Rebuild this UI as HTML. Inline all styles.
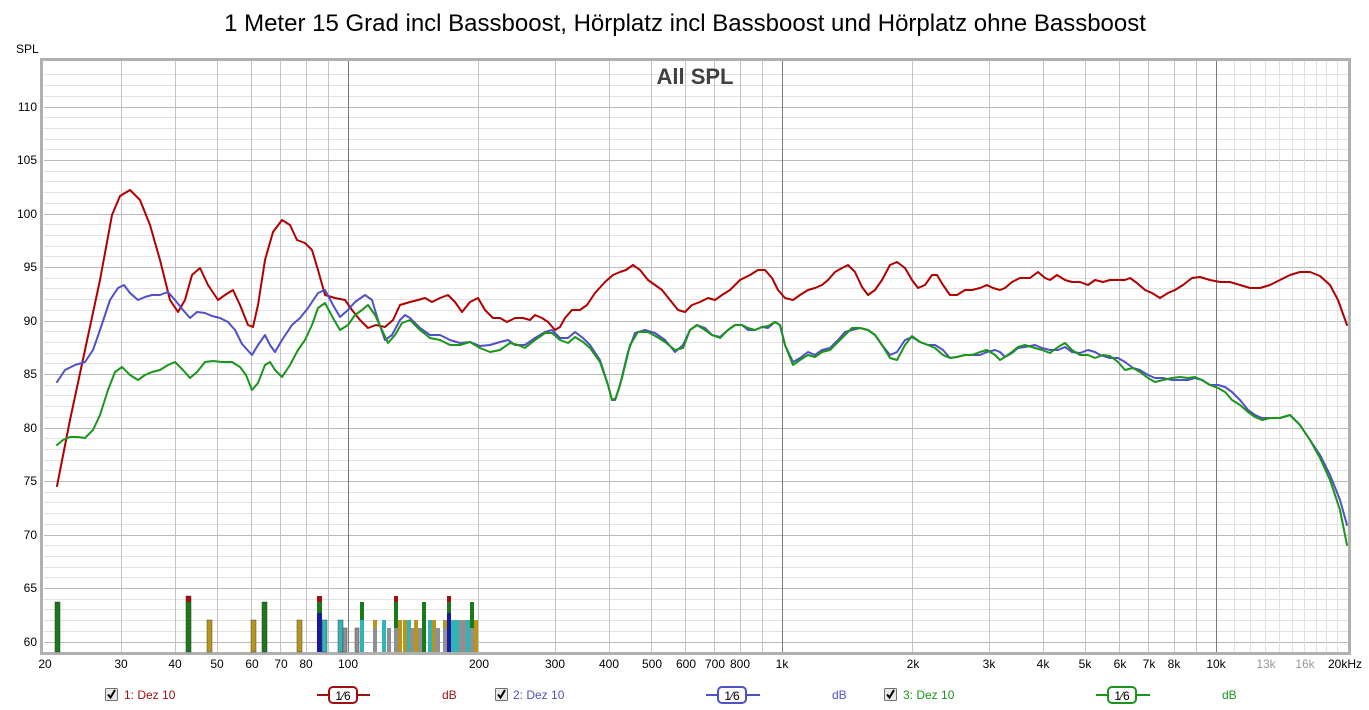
<!DOCTYPE html>
<html><head><meta charset="utf-8"><style>
html,body{margin:0;padding:0;background:#fff;width:1369px;height:710px;overflow:hidden}
svg{display:block;font-family:"Liberation Sans",sans-serif}
</style></head><body>
<svg width="1369" height="710" viewBox="0 0 1369 710" xmlns="http://www.w3.org/2000/svg">
<text x="685" y="31" font-size="24" text-anchor="middle" fill="#000">1 Meter 15 Grad incl Bassboost, Hörplatz incl Bassboost und Hörplatz ohne Bassboost</text>
<text x="16" y="53" font-size="12" fill="#000">SPL</text>
<rect x="41.5" y="59.5" width="1308" height="594" fill="#fff" stroke="#b0b0b0" stroke-width="3"/>
<g stroke="#e2e2e2" stroke-width="1">
<path d="M44 74.5H1348M44 85.5H1348M44 96.5H1348M44 117.5H1348M44 128.5H1348M44 139.5H1348M44 149.5H1348M44 171.5H1348M44 181.5H1348M44 192.5H1348M44 203.5H1348M44 224.5H1348M44 235.5H1348M44 246.5H1348M44 256.5H1348M44 278.5H1348M44 288.5H1348M44 299.5H1348M44 310.5H1348M44 331.5H1348M44 342.5H1348M44 353.5H1348M44 363.5H1348M44 385.5H1348M44 395.5H1348M44 406.5H1348M44 417.5H1348M44 438.5H1348M44 449.5H1348M44 460.5H1348M44 470.5H1348M44 492.5H1348M44 502.5H1348M44 513.5H1348M44 524.5H1348M44 545.5H1348M44 556.5H1348M44 567.5H1348M44 577.5H1348M44 599.5H1348M44 609.5H1348M44 620.5H1348M44 631.5H1348"/>
</g>
<g stroke="#b8b8b8" stroke-width="1">
<path d="M44 107.5H1348M44 160.5H1348M44 214.5H1348M44 267.5H1348M44 321.5H1348M44 374.5H1348M44 428.5H1348M44 481.5H1348M44 535.5H1348M44 588.5H1348M44 642.5H1348"/>
</g>
<g stroke="#c4c4c4" stroke-width="1">
<path d="M121.5 61V652M175.5 61V652M217.5 61V652M251.5 61V652M280.5 61V652M306.5 61V652M328.5 61V652M478.5 61V652M555.5 61V652M609.5 61V652M651.5 61V652M685.5 61V652M714.5 61V652M740.5 61V652M762.5 61V652M912.5 61V652M989.5 61V652M1043.5 61V652M1085.5 61V652M1119.5 61V652M1148.5 61V652M1174.5 61V652M1196.5 61V652"/>
</g>
<g stroke="#e0e0e0" stroke-width="1">
<path d="M1234.5 61V652M1250.5 61V652M1265.5 61V652M1279.5 61V652M1292.5 61V652M1304.5 61V652M1316.5 61V652M1326.5 61V652M1337.5 61V652"/>
</g>
<g stroke="#7a7a7a" stroke-width="1">
<path d="M348.5 61V652M782.5 61V652M1216.5 61V652"/>
</g>
<text x="695" y="84" font-size="22" font-weight="bold" text-anchor="middle" fill="#404040">All SPL</text>
<g>
<rect x="55" y="602" width="5" height="50" fill="#1a7a1a" stroke="#333" stroke-width=".5"/>
<rect x="186" y="596" width="5" height="56" fill="#1a7a1a" stroke="#333" stroke-width=".5"/><rect x="186" y="596" width="5" height="6" fill="#a01010"/>
<rect x="207" y="620" width="5" height="32" fill="#b8961e" stroke="#444" stroke-width=".5"/>
<rect x="251" y="620" width="5" height="32" fill="#b8961e" stroke="#444" stroke-width=".5"/>
<rect x="262" y="602" width="5" height="50" fill="#1a7a1a" stroke="#333" stroke-width=".5"/>
<rect x="297" y="620" width="5" height="32" fill="#b8961e" stroke="#444" stroke-width=".5"/>
<rect x="317" y="596" width="5" height="56" fill="#1a7a1a"/><rect x="317" y="596" width="5" height="6" fill="#a01010"/><rect x="317" y="613" width="5" height="39" fill="#1a1aa0"/>
<rect x="322" y="620" width="5" height="32" fill="#30b4b4" stroke="#444" stroke-width=".5"/>
<rect x="338" y="620" width="5" height="32" fill="#30b4b4" stroke="#444" stroke-width=".5"/>
<rect x="343" y="628" width="4" height="24" fill="#909090" stroke="#444" stroke-width=".5"/>
<rect x="355" y="628" width="4" height="24" fill="#909090" stroke="#444" stroke-width=".5"/>
<rect x="360" y="602" width="4" height="50" fill="#1a7a1a"/><rect x="360" y="620" width="4" height="32" fill="#30b4b4"/>
<rect x="373" y="620" width="4" height="32" fill="#b8961e"/><rect x="373" y="628" width="4" height="24" fill="#909090"/>
<rect x="382" y="620" width="4" height="32" fill="#30b4b4"/><rect x="387" y="628" width="4" height="24" fill="#909090"/>
<rect x="394" y="596" width="4" height="56" fill="#1a7a1a"/><rect x="394" y="596" width="4" height="6" fill="#a01010"/><rect x="394" y="628" width="4" height="24" fill="#909090"/>
<rect x="398" y="620" width="4" height="32" fill="#b8961e"/>
<rect x="403" y="620" width="4" height="32" fill="#b8961e"/><rect x="407" y="620" width="4" height="32" fill="#30b4b4"/><rect x="410" y="628" width="4" height="24" fill="#909090"/>
<rect x="414" y="620" width="4" height="32" fill="#b8961e"/><rect x="418" y="628" width="4" height="24" fill="#909090"/>
<rect x="422" y="602" width="4" height="50" fill="#1a7a1a"/>
<rect x="428" y="620" width="4" height="32" fill="#30b4b4"/><rect x="432" y="620" width="4" height="32" fill="#b8961e"/><rect x="435" y="628" width="5" height="24" fill="#909090"/>
<rect x="443" y="620" width="4" height="32" fill="#b8961e"/><rect x="443" y="628" width="4" height="24" fill="#909090"/>
<rect x="447" y="596" width="4" height="56" fill="#1a7a1a"/><rect x="447" y="596" width="4" height="6" fill="#a01010"/><rect x="447" y="613" width="4" height="39" fill="#1a1aa0"/>
<rect x="451" y="620" width="4" height="32" fill="#30b4b4"/><rect x="455" y="620" width="4" height="32" fill="#30b4b4"/><rect x="459" y="620" width="4" height="32" fill="#909090"/><rect x="463" y="620" width="4" height="32" fill="#909090"/>
<rect x="466" y="620" width="4" height="32" fill="#30b4b4"/>
<rect x="470" y="602" width="4" height="50" fill="#1a7a1a"/><rect x="470" y="628" width="4" height="24" fill="#909090"/>
<rect x="474" y="620" width="4" height="32" fill="#b8961e"/>
</g>
<g fill="none" stroke-width="2" stroke-linejoin="round" stroke-linecap="round">
<polyline stroke="#b00000" points="57,486 70,420 85,350 100,280 112,215 120,196 130,190 140,200 150,225 160,260 170,300 178,312 185,300 192,275 200,268 208,285 218,300 225,295 233,290 240,305 248,325 253,327 258,305 265,260 273,232 282,220 290,225 297,240 305,243 312,250 318,270 325,295 335,298 345,300 352,310 360,320 368,328 376,325 385,327 393,320 400,305 410,302 418,300 425,298 432,302 440,298 448,295 455,302 462,312 470,302 478,298 485,310 493,318 500,318 507,322 515,318 523,318 530,320 535,315 542,318 548,322 555,330 560,327 565,318 572,310 580,310 587,305 595,293 605,282 613,275 620,272 626,270 633,265 640,270 648,280 655,285 662,290 670,300 678,310 685,312 692,305 700,302 708,298 715,300 722,295 730,290 740,280 750,275 758,270 765,270 772,278 778,290 785,298 793,300 800,295 808,290 815,288 822,285 828,280 835,272 842,268 848,265 855,272 862,287 868,295 875,290 882,280 890,265 897,262 905,268 912,280 918,288 925,285 932,275 937,275 943,285 950,295 957,295 965,290 972,290 980,288 987,285 993,288 1000,290 1005,288 1012,282 1020,278 1030,278 1038,272 1045,278 1050,280 1057,275 1065,280 1072,282 1080,282 1088,285 1095,280 1103,282 1110,280 1118,280 1125,280 1130,278 1137,283 1145,290 1152,293 1160,298 1168,293 1175,290 1183,285 1192,278 1200,277 1210,280 1220,282 1230,282 1240,285 1250,288 1260,288 1270,285 1280,280 1290,275 1300,272 1310,272 1320,276 1330,285 1338,300 1347,325"/>
<polyline stroke="#5050c8" points="57,382 65,370 75,365 85,362 93,350 100,330 110,300 118,288 124,285 130,293 138,300 145,297 152,295 160,295 168,292 175,300 183,310 190,318 197,312 205,313 212,316 220,318 228,322 235,330 242,344 252,355 258,345 265,335 270,345 275,352 282,340 292,325 300,318 308,308 318,293 325,290 333,305 340,317 348,310 355,302 365,295 372,300 378,320 385,340 392,335 400,320 405,315 410,318 420,328 430,335 440,335 450,340 460,343 470,342 480,346 490,345 500,342 508,340 515,345 525,345 535,338 545,332 552,330 560,338 568,338 575,332 583,338 590,345 600,360 608,385 612,400 615,400 620,385 628,352 635,333 645,330 655,333 665,340 675,352 683,345 690,330 697,325 705,328 712,335 720,337 728,330 735,325 742,325 748,330 755,330 762,327 768,328 775,322 780,325 785,345 793,362 800,358 808,352 815,355 822,350 830,348 838,340 845,332 852,330 860,328 868,330 875,335 882,345 890,355 897,352 905,340 912,337 920,342 928,345 935,345 943,350 950,358 957,357 965,355 972,355 980,355 987,352 995,350 1000,352 1005,357 1012,353 1018,348 1025,347 1035,345 1042,348 1050,350 1058,350 1065,347 1072,352 1080,353 1088,350 1095,352 1100,355 1110,358 1118,358 1125,362 1133,368 1140,370 1148,375 1155,378 1163,378 1172,380 1180,380 1188,380 1195,378 1202,380 1210,385 1218,385 1225,387 1232,392 1240,400 1248,410 1255,415 1262,418 1270,418 1280,418 1290,415 1300,425 1310,440 1320,455 1330,475 1340,500 1347,525"/>
<polyline stroke="#1a961a" points="57,445 63,440 70,437 78,437 85,438 93,430 100,415 108,390 115,372 122,367 130,375 138,380 145,375 152,372 160,370 168,365 175,362 183,370 190,378 197,372 205,362 213,361 222,362 232,362 240,367 246,375 252,390 258,383 265,365 270,362 275,370 282,377 290,365 298,350 305,340 312,325 318,308 325,303 333,318 340,330 348,325 355,315 362,310 368,305 375,315 382,330 388,343 395,335 402,323 410,320 420,330 430,338 440,340 450,345 460,345 470,342 480,348 490,352 500,350 510,343 518,345 525,348 535,340 545,333 552,333 560,340 568,343 575,337 583,342 590,348 600,362 608,385 612,400 616,398 622,378 630,345 638,332 648,332 657,337 665,342 675,350 683,348 690,330 697,325 705,330 712,335 720,338 728,330 735,325 742,325 748,328 755,330 762,327 768,326 775,322 780,325 785,345 793,365 800,360 808,355 815,357 822,352 830,350 838,342 845,335 852,328 860,328 868,330 875,335 882,345 890,358 897,360 905,345 912,336 920,342 928,345 935,348 943,355 950,358 957,357 965,355 972,355 980,352 987,350 995,355 1000,360 1005,357 1012,352 1018,347 1025,345 1035,348 1042,350 1050,353 1058,347 1065,343 1072,350 1080,355 1088,355 1095,358 1103,355 1110,356 1118,362 1125,370 1133,368 1140,372 1148,378 1155,382 1163,380 1172,378 1180,377 1188,378 1195,377 1202,380 1210,385 1218,388 1225,392 1232,400 1240,405 1248,412 1255,417 1262,420 1270,418 1280,418 1290,415 1300,425 1310,440 1320,458 1330,480 1340,510 1347,545"/>
</g>
<g font-size="12" text-anchor="end" fill="#000">
<text x="37" y="111">110</text><text x="37" y="164">105</text><text x="37" y="218">100</text><text x="37" y="271">95</text><text x="37" y="325">90</text><text x="37" y="378">85</text><text x="37" y="432">80</text><text x="37" y="485">75</text><text x="37" y="539">70</text><text x="37" y="592">65</text><text x="37" y="646">60</text>
</g>
<g font-size="12" text-anchor="middle" fill="#000">
<text x="45" y="668">20</text><text x="121" y="668">30</text><text x="175" y="668">40</text><text x="217" y="668">50</text><text x="252" y="668">60</text><text x="281" y="668">70</text><text x="306" y="668">80</text><text x="348" y="668">100</text><text x="479" y="668">200</text><text x="555" y="668">300</text><text x="609" y="668">400</text><text x="652" y="668">500</text><text x="686" y="668">600</text><text x="715" y="668">700</text><text x="740" y="668">800</text><text x="782" y="668">1k</text><text x="913" y="668">2k</text><text x="989" y="668">3k</text><text x="1043" y="668">4k</text><text x="1085" y="668">5k</text><text x="1120" y="668">6k</text><text x="1149" y="668">7k</text><text x="1174" y="668">8k</text><text x="1216" y="668">10k</text><text x="1266" y="668" fill="#999">13k</text><text x="1305" y="668" fill="#999">16k</text><text x="1345" y="668">20kHz</text>
</g>
<g font-size="12">
<g transform="translate(105,688)"><rect x=".5" y=".5" width="12" height="12" fill="#e8e8e8" stroke="#707070" rx="1"/><path d="M3 6.5l2.5 3L10 2" stroke="#000" stroke-width="2" fill="none"/></g>
<text x="124" y="699" fill="#a01010">1: Dez 10</text>
<g stroke="#a01010" stroke-width="2" fill="#fff"><path d="M317 695H370"/><rect x="329" y="687" width="28" height="16" rx="4"/></g>
<text x="343" y="700" text-anchor="middle" font-size="12" fill="#000">1⁄6</text>
<text x="442" y="699" fill="#a01010">dB</text>
<g transform="translate(495,688)"><rect x=".5" y=".5" width="12" height="12" fill="#e8e8e8" stroke="#707070" rx="1"/><path d="M3 6.5l2.5 3L10 2" stroke="#000" stroke-width="2" fill="none"/></g>
<text x="513" y="699" fill="#5050c8">2: Dez 10</text>
<g stroke="#5050c8" stroke-width="2" fill="#fff"><path d="M706 695H760"/><rect x="718" y="687" width="28" height="16" rx="4"/></g>
<text x="732" y="700" text-anchor="middle" fill="#000">1⁄6</text>
<text x="832" y="699" fill="#5050c8">dB</text>
<g transform="translate(884,688)"><rect x=".5" y=".5" width="12" height="12" fill="#e8e8e8" stroke="#707070" rx="1"/><path d="M3 6.5l2.5 3L10 2" stroke="#000" stroke-width="2" fill="none"/></g>
<text x="903" y="699" fill="#1a961a">3: Dez 10</text>
<g stroke="#1a961a" stroke-width="2" fill="#fff"><path d="M1096 695H1150"/><rect x="1108" y="687" width="28" height="16" rx="4"/></g>
<text x="1122" y="700" text-anchor="middle" fill="#000">1⁄6</text>
<text x="1222" y="699" fill="#1a961a">dB</text>
</g>
</svg>
</body></html>
